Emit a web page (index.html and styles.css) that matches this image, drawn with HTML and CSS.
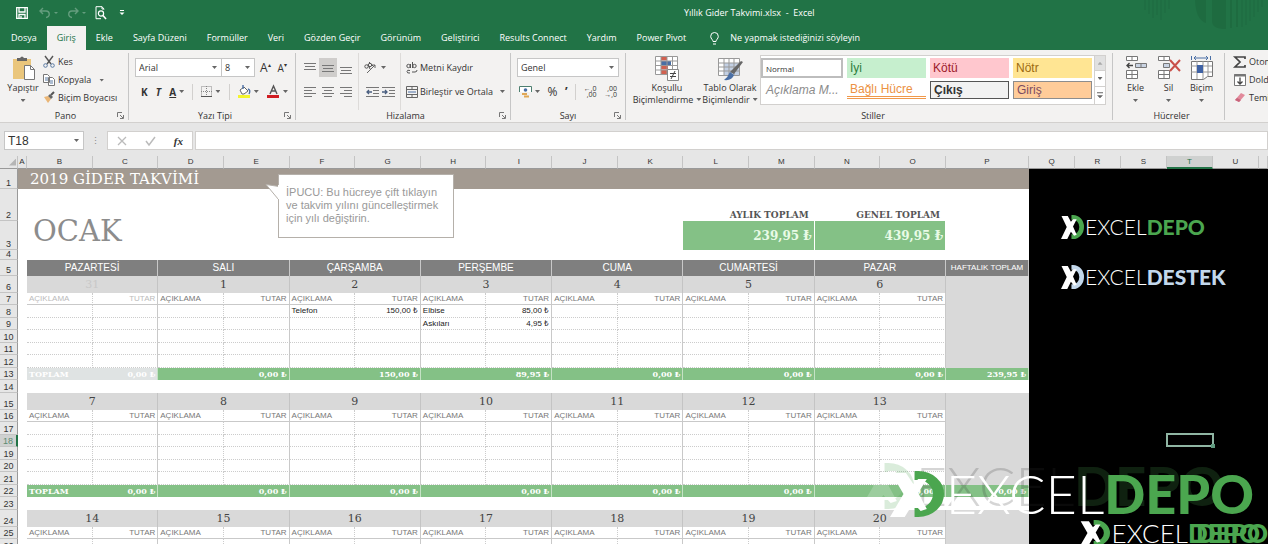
FILE: index.html
```html
<!DOCTYPE html>
<html lang="tr">
<head>
    <meta charset="UTF-8">
    <meta name="viewport" content="width=device-width, initial-scale=1.0">
    <title>Yıllık Gider Takvimi.xlsx - Excel</title>
    <link rel="stylesheet" href="styles.css">
</head>
<body>
    <svg class="defs" aria-hidden="true">
        <symbol id="mark" viewBox="0 0 44 46" preserveAspectRatio="none">
            <path d="M20 4.500h3a16.500 18.500 0 0 1 0 37h-3" fill="none" stroke="currentColor" stroke-width="9"/>
            <path class="mark-x" d="M1 2h12l6 11 4-5h7l-7 14 7 16-5 2-6-8-7 14H0l11-23z"/>
        </symbol>
        <symbol id="launcher" viewBox="0 0 8 8">
            <path d="M.5 5V.5H5M3 3l3 3M6.500 3v3.500H3" fill="none" stroke="#777"/>
        </symbol>
    </svg>

    <header class="titlebar">
        <div class="quick">
            <button aria-label="Kaydet"><svg width="12" height="12" viewBox="0 0 12 12"><path d="M.7.7h10.600v10.600H.7zM3 1v4h6V1M3 11V7.500h6V11M5 9v2" fill="none" stroke="#fff" stroke-width="1.300"/></svg></button>
            <button class="dim" aria-label="Geri Al"><svg width="20" height="12" viewBox="0 0 20 12"><path d="M1 4h6a3 3 0 0 1 0 6.500M4 1L1 4l3 3" fill="none" stroke="#fff" stroke-width="1.400"/><path d="M15 5h4l-2 2z" fill="#fff"/></svg></button>
            <button class="dim" aria-label="Yinele"><svg width="20" height="12" viewBox="0 0 20 12"><path d="M11 4H5a3 3 0 0 0 0 6.500M8 1l3 3-3 3" fill="none" stroke="#fff" stroke-width="1.400"/><path d="M15 5h4l-2 2z" fill="#fff"/></svg></button>
            <button aria-label="Baskı Önizleme"><svg width="12" height="14" viewBox="0 0 12 14"><path d="M9 3.500V3L7 .7H1v12h5M7 .7V3h2" fill="none" stroke="#fff"/><circle cx="6" cy="7.500" r="2.600" fill="none" stroke="#fff" stroke-width="1.200"/><path d="M8 9.500l3 3.500" stroke="#fff" stroke-width="1.600"/></svg></button>
            <button aria-label="Özelleştir"><svg width="6" height="6" viewBox="0 0 6 6"><path d="M1 .5h4" stroke="#fff"/><path d="M.5 2.500h5L3 5z" fill="#fff"/></svg></button>
        </div>
        <h1 class="doc-title">Yıllık Gider Takvimi.xlsx&nbsp; -&nbsp; Excel</h1>
        <svg class="motif" width="126" height="30" viewBox="0 0 126 30" aria-hidden="true">
            <path d="M3 0v10M7 0v14M11 0v18M15 0v15M19 0v20M23 0v13M27 0v9M100 0v27M104 0v25M108 0v21M112 0v17M116 0v12M120 0v7" stroke="#1b6038"/>
            <path d="M53 0h11v23q-10-3-11-23zM70 0h14v29q-14 0-14-8zM88 0h2v28h-2zM94 0h2v27h-2z" fill="#1b6038"/>
        </svg>
    </header>

    <nav class="tabs">
        <a href="#">Dosya</a>
        <a href="#" class="active">Giriş</a>
        <a href="#">Ekle</a>
        <a href="#">Sayfa Düzeni</a>
        <a href="#">Formüller</a>
        <a href="#">Veri</a>
        <a href="#">Gözden Geçir</a>
        <a href="#">Görünüm</a>
        <a href="#">Geliştirici</a>
        <a href="#">Results Connect</a>
        <a href="#">Yardım</a>
        <a href="#">Power Pivot</a>
        <a href="#" class="tell-me"><svg width="9" height="13" viewBox="0 0 9 13"><path d="M3 9.500C3 7.500.7 7 .7 4.300a3.800 3.800 0 0 1 7.600 0C8.300 7 6 7.500 6 9.500zM3 12h3" fill="none" stroke="#fff"/></svg>Ne yapmak istediğinizi söyleyin</a>
    </nav>

    <section class="ribbon">
        <div class="group clipboard">
            <div class="group-body">
                <button class="big"><svg width="23" height="25" viewBox="0 0 23 25"><path d="M1 3h18v20H1z" fill="#eac67c"/><path d="M5 5V2h3q2-3 4 0h3v3z" fill="#666"/><path d="M12.500 9.500h6l4 4v10h-10z" fill="#fff" stroke="#777"/><path d="M18.500 9.500v4h4" fill="none" stroke="#777"/></svg><span>Yapıştır</span><i class="caret"></i></button>
                <div class="stack">
                    <button><svg width="12" height="12" viewBox="0 0 12 12"><path d="M2 0l6 8M10 0L4 8" stroke="#555" stroke-width="1.400"/><circle cx="2.500" cy="9.500" r="1.800" fill="none" stroke="#5b7ba3"/><circle cx="9.500" cy="9.500" r="1.800" fill="none" stroke="#5b7ba3"/></svg>Kes</button>
                    <button><svg width="12" height="12" viewBox="0 0 12 12"><path d="M.5.500h4l2 2v6h-6zM5.500 3.500h4l2 2v6h-6z" fill="#fff" stroke="#777"/><path d="M2 4h3M2 6h3M7 7h3M7 9h3" stroke="#5b7ba3"/></svg>Kopyala<i class="caret"></i></button>
                    <button><svg width="12" height="12" viewBox="0 0 12 12"><path d="M1 5l4-1 3 3-3 4z" fill="#eab676"/><path d="M5 4l2-2 3 3-2 2z" fill="#666"/><path d="M8 3l3-3" stroke="#555" stroke-width="2"/></svg>Biçim Boyacısı</button>
                </div>
            </div>
            <div class="group-label">Pano<svg class="launch" width="8" height="8"><use href="#launcher"/></svg></div>
        </div>

        <div class="group font">
            <div class="group-body rows">
                <div class="line">
                    <label class="combo family"><select aria-label="Yazı tipi"><option>Arial</option></select><i class="caret"></i></label>
                    <label class="combo size"><select aria-label="Yazı boyutu"><option>8</option></select><i class="caret"></i></label>
                    <button class="grow" aria-label="Büyüt">A<sup>▴</sup></button>
                    <button class="shrink" aria-label="Küçült">A<sup>▾</sup></button>
                </div>
                <div class="line spread">
                    <button class="glyph"><b>K</b></button>
                    <button class="glyph"><b><em>T</em></b></button>
                    <button class="glyph"><b><u>A</u></b><i class="caret"></i></button>
                    <i class="rule"></i>
                    <button aria-label="Kenarlıklar"><svg width="11" height="11" viewBox="0 0 11 11"><path d="M.5.500h10v10H.5zM5.500 0v11M0 5.500h11" fill="none" stroke="#888" stroke-dasharray="1 1"/><path d="M0 10.500h11" stroke="#555"/></svg><i class="caret"></i></button>
                    <i class="rule"></i>
                    <button aria-label="Dolgu"><svg width="13" height="13" viewBox="0 0 13 13"><path d="M2 5l4-3 4 4-4 3H4z" fill="#fff" stroke="#666"/><path d="M5 4V0M10 4q3 1 1 5" fill="none" stroke="#4a6fa5" stroke-width="1.400"/><path d="M0 10h12v3H0z" fill="#f4f52d"/></svg><i class="caret"></i></button>
                    <button aria-label="Yazı rengi"><svg width="13" height="13" viewBox="0 0 13 13"><path d="M3 9l3.500-8L10 9M4 6h5" fill="none" stroke="#555" stroke-width="1.400"/><path d="M0 10h12v3H0z" fill="#d01d22"/></svg><i class="caret"></i></button>
                </div>
            </div>
            <div class="group-label">Yazı Tipi<svg class="launch" width="8" height="8"><use href="#launcher"/></svg></div>
        </div>

        <div class="group align">
            <div class="group-body">
                <div class="trio">
                    <button aria-label="Üste hizala"><svg width="12" height="12"><path d="M0 1.500h12M1 4.500h10M0 7.500h12" stroke="#777"/></svg></button>
                    <button class="on" aria-label="Ortala"><svg width="12" height="12"><path d="M0 3.500h12M1 6.500h10M0 9.500h12" stroke="#777"/></svg></button>
                    <button aria-label="Alta hizala"><svg width="12" height="12"><path d="M0 5.500h12M1 8.500h10M0 11.500h12" stroke="#777"/></svg></button>
                    <button aria-label="Sola"><svg width="12" height="12"><path d="M0 1.500h12M0 4.500h8M0 7.500h12M0 10.500h8" stroke="#777"/></svg></button>
                    <button aria-label="Orta"><svg width="12" height="12"><path d="M0 1.500h12M2 4.500h8M0 7.500h12M2 10.500h8" stroke="#777"/></svg></button>
                    <button aria-label="Sağa"><svg width="12" height="12"><path d="M0 1.500h12M4 4.500h8M0 7.500h12M4 10.500h8" stroke="#777"/></svg></button>
                </div>
                <div class="duo">
                    <button class="wide" aria-label="Yönlendirme"><svg width="13" height="12" viewBox="0 0 13 12"><path d="M3 11l8-8M11 6V3H8" fill="none" stroke="#666"/><circle cx="2.500" cy="4.500" r="1.700" fill="none" stroke="#555"/><circle cx="6" cy="3" r="1.700" fill="none" stroke="#555"/><path d="M4 2l2 5M5 0l4 4" stroke="#555"/></svg><i class="caret"></i></button>
                    <button aria-label="Girintiyi azalt"><svg width="13" height="12"><path d="M0 1.500h13M7 4.500h6M7 7.500h6M0 10.500h13" stroke="#777"/><path d="M6 6H1M3 4L1 6l2 2" fill="none" stroke="#4a5f80" stroke-width="1.300"/></svg></button>
                    <button aria-label="Girintiyi artır"><svg width="13" height="12"><path d="M0 1.500h13M7 4.500h6M7 7.500h6M0 10.500h13" stroke="#777"/><path d="M0 6h5M3 4l2 2-2 2" fill="none" stroke="#4a5f80" stroke-width="1.300"/></svg></button>
                </div>
                <div class="merge">
                    <button><svg width="12" height="12" viewBox="0 0 12 12"><circle cx="2.500" cy="4" r="1.700" fill="none" stroke="#555"/><path d="M4.500 2v4M6.500 0v6M4 8.500q-3-1-3 1t3 1.500M6 10h3q2 0 2-2" fill="none" stroke="#555"/><circle cx="8.500" cy="4" r="1.700" fill="none" stroke="#555"/></svg>Metni Kaydır</button>
                    <button><svg width="12" height="12" viewBox="0 0 12 12"><path d="M.5.500h11v11H.5zM.5 3.500h11M.5 8.500h11M6 .5v3M6 8.500v3" fill="none" stroke="#666"/><path d="M2 6h8" stroke="#4a6fa5"/></svg>Birleştir ve Ortala<i class="caret"></i></button>
                </div>
            </div>
            <div class="group-label">Hizalama<svg class="launch" width="8" height="8"><use href="#launcher"/></svg></div>
        </div>

        <div class="group number">
            <div class="group-body rows">
                <div class="line">
                    <label class="combo format"><select aria-label="Sayı biçimi"><option>Genel</option></select><i class="caret"></i></label>
                </div>
                <div class="line spread">
                    <button aria-label="Para birimi"><svg width="13" height="12" viewBox="0 0 13 12"><path d="M.5 6V.5h12V6" fill="#fff" stroke="#4d7f70"/><circle cx="6.500" cy="4" r="1.800" fill="#4a6fa5"/><path d="M3 8h5M5 10.500h5" stroke="#e0a756" stroke-width="2"/></svg><i class="caret"></i></button>
                    <button class="percent">%</button>
                    <button class="percent"><b>’</b></button>
                    <i class="rule"></i>
                    <button class="decimal"><span>←,0</span><span>,00</span></button>
                    <button class="decimal"><span>,00</span><span>→,0</span></button>
                </div>
            </div>
            <div class="group-label">Sayı<svg class="launch" width="8" height="8"><use href="#launcher"/></svg></div>
        </div>

        <div class="group styles">
            <div class="group-body">
                <button class="big two"><svg width="24" height="25" viewBox="0 0 24 25"><path d="M.5.500h22v18H.5z" fill="#fff"/><path d="M6 .5h6v4H6zM6 14h6v5H6z" fill="#d2604f"/><path d="M6 5h10v4H6z" fill="#4a6fa5"/><path d="M6 9.500h7v4H6z" fill="#d2604f"/><path d="M.5.500h22v18H.5zM0 5h23M0 9.500h23M0 14h23M6 0v19M12 0v19M17.500 0v19" fill="none" stroke="#999"/><path d="M12.500 13.500h11v11h-11z" fill="#fff" stroke="#888"/><path d="M15 17.500h6M15 20.500h6M20 15l-4 8" stroke="#444"/></svg><span>Koşullu</span><span>Biçimlendirme<i class="caret"></i></span></button>
                <button class="big two"><svg width="24" height="25" viewBox="0 0 24 25"><path d="M.5 2.500h21v17H.5z" fill="#fff" stroke="#999"/><path d="M6 7h15v12H6z" fill="#c3d0e4"/><path d="M0 7h22M0 11h22M0 15h22M6 2v18M11 2v18M16 2v18" stroke="#999"/><path d="M23 5l2 1-9 12-4-2z" fill="#666"/><path d="M12 16l4 3q-2 6-10 5 4-3 6-8z" fill="#4a6fa5"/></svg><span>Tablo Olarak</span><span>Biçimlendir<i class="caret"></i></span></button>
                <div class="gallery">
                    <div class="swatches">
                        <button class="normal">Normal</button>
                        <button class="good">İyi</button>
                        <button class="bad">Kötü</button>
                        <button class="neutral">Nötr</button>
                        <button class="note">Açıklama M...</button>
                        <button class="linked">Bağlı Hücre</button>
                        <button class="output">Çıkış</button>
                        <button class="entry">Giriş</button>
                    </div>
                    <div class="scroller">
                        <button class="off" aria-label="Yukarı"><i class="caret up"></i></button>
                        <button aria-label="Aşağı"><i class="caret"></i></button>
                        <button aria-label="Diğer"><i class="caret more"></i></button>
                    </div>
                </div>
            </div>
            <div class="group-label">Stiller</div>
        </div>

        <div class="group cells">
            <div class="group-body">
                <button class="big"><svg width="22" height="25" viewBox="0 0 22 25"><path d="M1.500.500h11v4h-11zM7 .5v4M1.500 14.500h11v8h-11zM7 14.500v8M1.500 18.500h11" fill="#fff" stroke="#777"/><path d="M10.500 7.500h11v4h-11zM16 7.500v4" fill="#c9d3e2" stroke="#777"/><path d="M8 9.500H2M4.500 7L2 9.500 4.500 12" fill="none" stroke="#444" stroke-width="1.400"/></svg><span>Ekle</span><i class="caret"></i></button>
                <button class="big"><svg width="24" height="25" viewBox="0 0 24 25"><path d="M1.500.500h11v4h-11zM7 .5v4M1.500 14.500h11v8h-11zM7 14.500v8M1.500 18.500h11" fill="#fff" stroke="#777"/><path d="M6.500 7.500h6v4h-6z" fill="#c9d3e2" stroke="#777"/><path d="M13 4l10 11M23 4L13 15" stroke="#c9504a" stroke-width="2"/></svg><span>Sil</span><i class="caret"></i></button>
                <button class="big"><svg width="24" height="25" viewBox="0 0 24 25"><path d="M1.500 5.500h21v15h-5l-4 3h-12z" fill="#fff" stroke="#777"/><path d="M1 10h21M1 16h21M7 5v18M13 5v18M18 5v15" stroke="#999"/><path d="M7 9h6v8H7z" fill="#3f62a5"/><path d="M4 2h14M6 0L4 2l2 2M16 0l2 2-2 2M1.500 0v4M20.500 0v4" fill="none" stroke="#4a6fa5"/></svg><span>Biçim</span><i class="caret"></i></button>
            </div>
            <div class="group-label">Hücreler</div>
        </div>

        <div class="group editing">
            <div class="stack">
                <button><svg width="12" height="12" viewBox="0 0 12 12"><path d="M11 3V1H1l5 5-5 5h10V9" fill="none" stroke="#444" stroke-width="1.700"/></svg>Otomatik Toplam</button>
                <button><svg width="12" height="12" viewBox="0 0 12 12"><path d="M.5.500h11v11H.5z" fill="#fff" stroke="#777"/><path d="M0 1.500h12" stroke="#777" stroke-width="2"/><path d="M6 3.500V10M3.500 7.500L6 10l2.500-2.500" fill="none" stroke="#444" stroke-width="1.300"/></svg>Doldur</button>
                <button><svg width="12" height="12" viewBox="0 0 12 12"><path d="M1 8l6-7 4 2-6 7z" fill="#e28a9b"/><path d="M1 8l2-2 4 2-2 2z" fill="#c9657c"/></svg>Temizle</button>
            </div>
        </div>
    </section>

    <section class="formula-bar">
        <label class="combo name-box"><select aria-label="Ad kutusu"><option>T18</option></select><i class="caret"></i></label>
        <span class="dots">⋮</span>
        <div class="fx">
            <button aria-label="İptal"><svg width="10" height="10"><path d="M1 1l8 8M9 1L1 9" stroke="#bbb" stroke-width="1.300"/></svg></button>
            <button aria-label="Gir"><svg width="11" height="10"><path d="M1 5l3 4 6-8" fill="none" stroke="#bbb" stroke-width="1.500"/></svg></button>
            <button class="fn"><em>fx</em></button>
        </div>
        <input class="formula" type="text" aria-label="Formül çubuğu">
    </section>

    <main class="sheet">
        <table id="grid"></table>
        <div class="tip">İPUCU: Bu hücreye çift tıklayın ve takvim yılını güncelleştirmek için yılı değiştirin.
            <svg width="14" height="18" viewBox="0 0 14 18"><path d="M14 2.500L1 .5l12.500 15" fill="#fff" stroke="#b5b0aa"/><path d="M13.500 1v14" stroke="#fff"/></svg>
        </div>
        <div class="watermark ghost"><span class="logo large"><svg><use href="#mark"/></svg><span>EXCEL</span><strong>DEPO</strong></span></div>
        <div class="watermark front"><span class="logo large"><svg><use href="#mark"/></svg><span>EXCEL</span><strong>DEPO</strong></span></div>
        <div class="watermark lower"><span class="logo medium"><svg><use href="#mark"/></svg><span>EXCEL</span><strong>DEPO</strong></span></div>
        <div class="watermark lower-end"><span class="logo medium"><strong>DEPO</strong></span></div>
    </main>

    <script src="script.js"></script>
</body>
</html>
```
FILE: styles.css
```css
* {
    box-sizing: border-box;
}

body {
    margin: 0;
    height: 100vh;
    display: flex;
    flex-direction: column;
    overflow: hidden;
    background: #e6e6e6;
    color: #333;
    font-family: "Open Sans", "Noto Sans", sans-serif;
    font-size: 9px;
    line-height: 12px;
    white-space: nowrap;
}

button,
select,
input {
    margin: 0;
    padding: 0;
    border: 0;
    background: none;
    color: inherit;
    font: inherit;
}

button {
    display: flex;
    align-items: center;
    justify-content: center;
}

svg {
    display: block;
    flex: none;
    overflow: visible;
}

.defs {
    position: absolute;
    width: 0;
    height: 0;
}

.caret {
    flex: none;
    width: 5px;
    height: 3px;
    background: #666;
    clip-path: polygon(0 0, 100% 0, 50% 100%);
}

.caret.up {
    background: #aaa;
    clip-path: polygon(50% 0, 100% 100%, 0 100%);
}

.caret.more {
    width: 6px;
    height: 6px;
    clip-path: polygon(0 0, 100% 0, 100% 1px, 0 1px, 0 3px, 100% 3px, 50% 100%, 0 3px);
}

/* title bar and tabs */
.titlebar {
    display: flex;
    align-items: center;
    height: 26px;
    padding-left: 16px;
    background: #217346;
    color: #fff;
}

.quick {
    display: flex;
    align-items: center;
    gap: 8px;
    width: 668px;
}

.quick button:last-child {
    margin-left: 4px;
}

.quick .dim {
    opacity: 0.3;
}

.quick button:first-child {
    margin-right: 3px;
}

.doc-title {
    margin: 0;
    font-size: 9px;
    font-weight: 400;
}

.motif {
    align-self: flex-start;
    margin-left: auto;
    opacity: 0.4;
}

.tabs {
    display: flex;
    height: 24px;
    padding-left: 1px;
    background: #217346;
}

.tabs a {
    display: flex;
    align-items: center;
    padding: 0 10px;
    color: #fff;
    text-decoration: none;
}

.tabs .active {
    background: #f3f2f1;
    color: #217346;
}

.tabs .tell-me {
    gap: 11px;
    padding-left: 14px;
}

/* ribbon */
.ribbon {
    display: flex;
    height: 73px;
    padding-top: 3px;
    overflow: hidden;
    background: #f3f2f1;
    border-bottom: 1px solid #d2d0ce;
}

.group {
    position: relative;
    flex: none;
    display: flex;
    flex-direction: column;
    height: 67px;
    border-right: 1px solid #c6c6c6;
}

.group-body {
    flex: 1;
    display: flex;
}

.group-label {
    height: 12px;
    margin-bottom: -2px;
    text-align: center;
}

.launch {
    position: absolute;
    right: 3px;
    bottom: 0;
}

.clipboard { width: 129px; padding-left: 3px; }
.font { width: 167px; padding-left: 6px; }
.align { width: 215px; padding-left: 5px; }
.number { width: 115px; padding: 0 6px; }
.styles { width: 487px; padding-left: 8px; }
.cells { width: 112px; padding-left: 6px; }
.editing { border: 0; padding-left: 9px; }

.big {
    flex-direction: column;
    justify-content: flex-start;
    width: 40px;
    padding-top: 3px;
}

.cells .big {
    width: 33px;
}

.big svg {
    margin-bottom: 1px;
}

.big > .caret {
    margin-top: 5px;
}

.two {
    width: 66px;
    margin-right: -2px;
}

.two + .two {
    width: 64px;
}

.two .caret {
    display: inline-block;
    margin-left: 3px;
    vertical-align: 2px;
}

.stack button {
    height: 18px;
    gap: 3px;
}

.stack .caret {
    margin-left: 5px;
}

.rows {
    flex-direction: column;
    padding-top: 5px;
    gap: 5px;
}

.line {
    display: flex;
    align-items: center;
    height: 19px;
}

.combo {
    position: relative;
    display: block;
    height: 19px;
    background: #fff;
    border: 1px solid #c6c6c6;
}

.combo select {
    appearance: none;
    display: block;
    width: 100%;
    height: 100%;
    padding-left: 3px;
}

.combo .caret {
    position: absolute;
    top: 7px;
    right: 4px;
    pointer-events: none;
}

.family { width: 87px; }
.size { width: 34px; margin-left: -1px; }
.format { width: 103px; }

.grow,
.shrink {
    margin-left: 5px;
    font-size: 12px;
}

.shrink {
    margin-left: 7px;
    font-size: 10px;
}

.grow sup,
.shrink sup {
    align-self: flex-start;
    font-size: 6px;
    line-height: 6px;
}

.spread {
    justify-content: space-between;
    padding: 0 7px 0 6px;
}

.number .spread {
    padding: 0 2px;
}

.spread button {
    gap: 3px;
}

.glyph {
    font-size: 10px;
}

.rule {
    width: 1px;
    height: 16px;
    background: #d2d0ce;
}

.percent {
    font-size: 12px;
}

.spread .decimal {
    flex-direction: column;
    align-items: flex-end;
    gap: 0;
    font-size: 7px;
    line-height: 6px;
}

.trio {
    display: grid;
    grid-template-columns: repeat(3, 18px);
    grid-auto-rows: 19px;
    row-gap: 5px;
    padding-top: 5px;
    width: 57px;
}

.trio .on {
    background: #cfcdcb;
}

.duo {
    display: grid;
    grid-template-columns: repeat(2, 16px);
    grid-auto-rows: 19px;
    row-gap: 5px;
    padding: 5px 4px 0 5px;
    border-left: 1px solid #dddbd9;
    border-right: 1px solid #dddbd9;
}

.duo .wide {
    grid-column: span 2;
    gap: 4px;
    justify-content: flex-start;
}

.merge {
    padding: 5px 0 0 5px;
}

.merge button {
    height: 19px;
    margin-bottom: 5px;
    gap: 2px;
}

.merge .caret {
    margin-left: 5px;
}

.gallery {
    display: flex;
    height: 50px;
    margin-top: 2px;
    background: #fff;
    border: 1px solid #d2d0ce;
}

.swatches {
    display: grid;
    grid-template-columns: 82px repeat(3, 79px);
    grid-template-rows: 20px 18px;
    row-gap: 3px;
    column-gap: 4px;
    padding: 2px 2px 0 0;
}

.swatches button {
    justify-content: flex-start;
    padding-left: 3px;
    font: 12px "Liberation Sans", sans-serif;
}

.swatches .normal {
    border: 2px solid #bdbdbd;
    font: 8px "Open Sans", sans-serif;
}

.swatches .good { background: #c6efce; color: #2f7d3c; }
.swatches .bad { background: #ffc7ce; color: #9c1a2b; }
.swatches .neutral { background: #ffe593; color: #9c6a10; }
.swatches .note { padding-left: 5px; color: #8b8b8b; font-style: italic; }
.swatches .linked { border-bottom: 3px double #f0994b; color: #ec9243; }
.swatches .output { border: 1px solid #555; background: #f2f2f2; font-weight: bold; }
.swatches .entry { border: 1px solid #8d8d8d; background: #ffcc99; color: #7b4b62; }

.scroller {
    display: grid;
    width: 11px;
    border-left: 1px solid #d2d0ce;
}

.scroller button + button {
    border-top: 1px solid #d2d0ce;
}

.scroller .off {
    background: #e1e1e1;
}

/* formula bar */
.formula-bar {
    display: flex;
    flex: none;
    height: 33px;
    padding: 8px 0 6px 4px;
}

.name-box {
    width: 80px;
    font: 12px "Liberation Sans", sans-serif;
}

.dots {
    width: 23px;
    text-align: center;
    line-height: 19px;
    color: #888;
}

.fx {
    display: flex;
    align-items: center;
    justify-content: space-around;
    width: 86px;
    height: 19px;
    margin-right: 2px;
    background: #fff;
    border: 1px solid #d2d0ce;
}

.fn {
    font: bold 11px "Liberation Serif", serif;
}

.formula {
    flex: 1;
    height: 19px;
    background: #fff;
    border: 1px solid #d2d0ce;
}

/* worksheet */
.sheet {
    position: relative;
    flex: 1;
    min-height: 0;
    overflow: hidden;
    background: #fff;
}

table {
    width: 100%;
    table-layout: fixed;
    border-collapse: separate;
    border-spacing: 0;
    font: 8px/10px "Liberation Sans", sans-serif;
}

th,
td {
    padding: 0 2px;
    overflow: hidden;
}

.col-num { width: 18px; }
.col-a { width: 9px; }
.col-week { width: 83px; }
.col-side { width: 46px; }
.col-last { width: 9px; }

thead th {
    height: 13px;
    padding: 0;
    background: #e6e6e6;
    border-right: 1px solid #c4c4c4;
    border-bottom: 1px solid #999;
    font-weight: 400;
}

thead .selected {
    background: #cfd1d0;
    border-bottom: 2px solid #217346;
    color: #217346;
}

.corner::after {
    content: "";
    display: block;
    width: 7px;
    height: 7px;
    margin-left: 9px;
    background: #b5b5b5;
    clip-path: polygon(100% 0, 100% 100%, 0 100%);
}

tbody th {
    padding: 0;
    background: #e6e6e6;
    border-right: 1px solid #999;
    border-bottom: 1px solid #c4c4c4;
    font-size: 9px;
    font-weight: 400;
    line-height: 9px;
    vertical-align: bottom;
}

tbody th.selected {
    background: #cfd1d0;
    border-right: 2px solid #217346;
    color: #5c8a70;
}

.banner {
    padding-left: 12px;
    background: #a39a91;
    color: #fff;
    font: 15px/18px "DejaVu Serif", serif;
}

.month {
    padding: 0 0 4px 15px;
    color: #8c8c8c;
    font: 29px/29px "DejaVu Serif", serif;
    vertical-align: bottom;
}

.sum-label {
    padding-right: 6px;
    color: #555;
    font: bold 9px/11px "DejaVu Serif", serif;
    text-align: right;
    vertical-align: bottom;
}

.sum {
    background: #84c186;
    border-right: 1px solid #fff;
    color: #e9fbe6;
    font: bold 12px/18px "DejaVu Serif", serif;
    text-align: right;
}

.day {
    background: #7f7f7f;
    border-right: 1px solid #c8c8c8;
    color: #fff;
    font-size: 10px;
    text-align: center;
}

.week-head {
    font-size: 8px;
}

.date,
.gray {
    background: #d9d9d9;
}

.date {
    border-right: 1px solid #c4c4c4;
    color: #444;
    font: 11px/14px "DejaVu Serif", serif;
    text-align: center;
}

.date.off {
    color: #c8c8c8;
}

.head {
    border-bottom: 1px solid #c9c9c9;
    color: #777;
}

.item {
    border-bottom: 1px dotted #ccc;
    color: #222;
}

.left {
    border-right: 1px dotted #ccc;
}

.right {
    border-right: 1px solid #c9c9c9;
    text-align: right;
}

.head.off {
    color: #bbb;
}

.total {
    background: #84c186;
    color: #fff;
    font: bold 8px/10px "DejaVu Serif", serif;
}

.total.right {
    border-right-color: #c5e2c5;
}

.total.off {
    background: #dfe3e3;
}

.side {
    padding: 43px 0 0 32px;
    background: #000;
    vertical-align: top;
}

/* logos */
.logo {
    display: flex;
    align-items: center;
    color: #4ba64f;
    font-family: Lato, sans-serif;
}

.logo span {
    color: #fff;
    font-weight: 300;
}

.logo strong {
    font-weight: 900;
}

.mark-x {
    fill: #fff;
}

.small {
    height: 30px;
    margin-bottom: 20px;
    font-size: 21px;
    line-height: 30px;
}

.small svg {
    width: 23px;
    height: 24px;
    margin-right: 1px;
}

.blue {
    color: #c3d8ec;
}

.watermark {
    position: absolute;
}

.large {
    font-size: 54px;
    line-height: 54px;
}

.large svg {
    width: 54px;
    height: 46px;
    margin-right: 2px;
}

.medium {
    font-size: 26px;
    line-height: 28px;
}

.medium svg {
    width: 30px;
    height: 26px;
    margin-right: 2px;
}

.front { right: 14px; bottom: 23px; }
.ghost { right: 44px; bottom: 31px; opacity: 0.2; }
.lower { right: 8px; bottom: -3px; }
.lower-end { right: 0; bottom: -3px; }

.ghost .logo span {
    color: #333;
}

.ghost .mark-x {
    fill: #333;
}

/* overlays on the cells */
.tip {
    position: absolute;
    top: 18px;
    left: 278px;
    width: 176px;
    height: 64px;
    padding: 11px 8px 0 7px;
    background: #fff;
    border: 1px solid #b5b0aa;
    color: #999;
    font: 11px/13px "Liberation Sans", sans-serif;
    white-space: normal;
}

.tip svg {
    position: absolute;
    top: 9px;
    left: -14px;
}

.cursor {
    position: absolute;
    top: 277px;
    right: 54px;
    width: 48px;
    height: 14px;
    border: 2px solid #8fb5a3;
}

.cursor::after {
    content: "";
    position: absolute;
    right: -3px;
    bottom: -3px;
    width: 4px;
    height: 4px;
    background: #5f9a7e;
}
```
FILE: script.js
```javascript
const days = ['PAZARTESİ', 'SALI', 'ÇARŞAMBA', 'PERŞEMBE', 'CUMA', 'CUMARTESİ', 'PAZAR'];

const weeks = [
    {
        dates: [31, 1, 2, 3, 4, 5, 6],
        totals: ['0,00 ₺', '0,00 ₺', '150,00 ₺', '89,95 ₺', '0,00 ₺', '0,00 ₺', '0,00 ₺'],
        sum: '239,95 ₺',
        items: { 2: [['Telefon', '150,00 ₺']], 3: [['Elbise', '85,00 ₺'], ['Askıları', '4,95 ₺']] }
    },
    { dates: [7, 8, 9, 10, 11, 12, 13], totals: Array(7).fill('0,00 ₺'), sum: '0,00 ₺', items: {} },
    { dates: [14, 15, 16, 17, 18, 19, 20], totals: Array(7).fill('0,00 ₺'), sum: '0,00 ₺', items: {} }
];

// row heights repeat inside every week block
const heights = [20, 32, 29, 10, 16];
const blockHeights = [17, 12, 13, 12, 13, 12, 13, 12, 13];

let rowNo = 0;
let html = '';

function row(height, cells) {
    rowNo++;
    const selected = rowNo === 18 ? ' class="selected"' : '';
    html += `<tr style="height:${height}px"><th${selected}>${rowNo}</th>${cells}</tr>`;
}

const logo = (name, cls) => `<div class="logo small ${cls}"><svg><use href="#mark"/></svg><span>EXCEL</span><strong>${name}</strong></div>`;

html += '<colgroup><col class="col-num"><col class="col-a">' + '<col>'.repeat(14) +
    '<col class="col-week">' + '<col class="col-side">'.repeat(5) + '<col class="col-last"></colgroup>';
html += '<thead><tr><th class="corner"></th>' +
    [...'ABCDEFGHIJKLMNOPQRSTU'].map(c => `<th${c === 'T' ? ' class="selected"' : ''}>${c}</th>`).join('') +
    '<th></th></tr></thead><tbody>';

row(heights[0], `<td class="banner" colspan="16">2019 GİDER TAKVİMİ</td>
    <td class="side" colspan="6" rowspan="26">${logo('DEPO', '')}${logo('DESTEK', 'blue')}<div class="cursor"></div></td>`);
// the month name spans two rows
row(heights[1], `<td class="month" colspan="11" rowspan="2">OCAK</td><td class="sum-label" colspan="2">AYLIK TOPLAM</td>
    <td class="sum-label" colspan="2">GENEL TOPLAM</td><td></td>`);
row(heights[2], `<td class="sum" colspan="2">239,95 ₺</td>
    <td class="sum" colspan="2">439,95 ₺</td><td></td>`);
row(heights[3], '<td colspan="16"></td>');
row(heights[4], '<td></td>' + days.map(d => `<td class="day" colspan="2">${d}</td>`).join('') +
    '<td class="day week-head">HAFTALIK TOPLAM</td>');

weeks.forEach((week, w) => {
    const off = i => (w === 0 && i === 0 ? ' off' : '');
    const each = fn => '<td></td>' + week.dates.map((d, i) => fn(d, i)).join('');

    row(blockHeights[0], each((d, i) => `<td class="date${off(i)}" colspan="2">${d}</td>`) + '<td class="gray"></td>');
    row(blockHeights[1], each((d, i) => `<td class="head left${off(i)}">AÇIKLAMA</td><td class="head right${off(i)}">TUTAR</td>`) +
        '<td class="gray"></td>');
    for (let n = 0; n < 5; n++) {
        row(blockHeights[n + 2], each((d, i) => {
            const item = (week.items[i] || [])[n] || ['', ''];
            return `<td class="item left">${item[0]}</td><td class="item right">${item[1]}</td>`;
        }) + '<td class="gray"></td>');
    }
    row(blockHeights[7], each((d, i) => `<td class="total${off(i)}">${i === 0 ? 'TOPLAM' : ''}</td>
        <td class="total right${off(i)}">${week.totals[i]}</td>`) + `<td class="total right">${week.sum}</td>`);
    row(blockHeights[8], '<td colspan="16"></td>');
});

document.getElementById('grid').innerHTML = html + '</tbody>';
```
